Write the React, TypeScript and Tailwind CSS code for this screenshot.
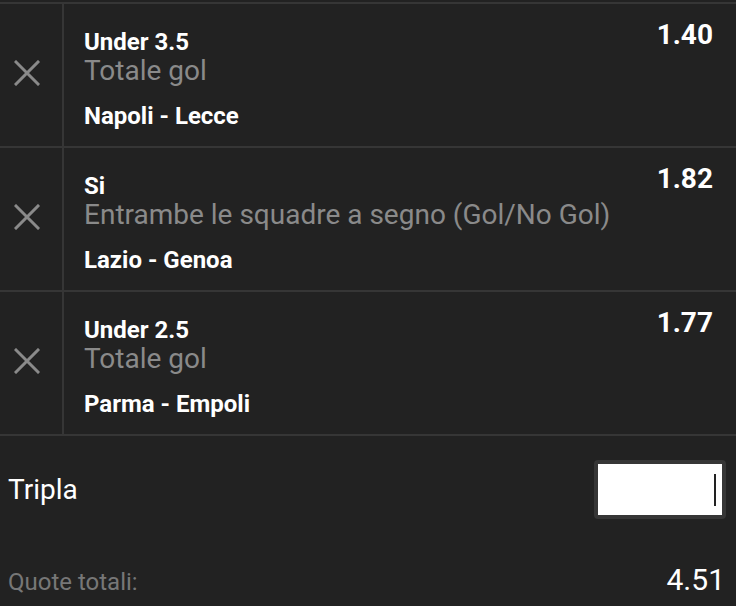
import React from "react";

type Bet = {
  pick: string;
  market: string;
  match: string;
  odds: string;
};

const bets: Bet[] = [
  { pick: "Under 3.5", market: "Totale gol", match: "Napoli - Lecce", odds: "1.40" },
  { pick: "Si", market: "Entrambe le squadre a segno (Gol/No Gol)", match: "Lazio - Genoa", odds: "1.82" },
  { pick: "Under 2.5", market: "Totale gol", match: "Parma - Empoli", odds: "1.77" },
];

function CloseIcon() {
  return (
    <svg width="26" height="26" viewBox="0 0 26 26" fill="none">
      <path d="M2 2 L24 24 M24 2 L2 24" stroke="#8a8a8a" strokeWidth="3" strokeLinecap="square" />
    </svg>
  );
}

function BetRow({ bet }: { bet: Bet }) {
  return (
    <div className="flex h-[144px] border-b-2 border-[#363636]">
      <div className="flex w-[64px] shrink-0 items-center border-r-2 border-[#363636] pl-[14px] pb-[4px]">
        <CloseIcon />
      </div>
      <div className="flex flex-1 justify-between">
        <div className="flex flex-col pl-[20px] pt-[25px]">
          <div className="text-[24px] font-bold leading-[26px] text-white">{bet.pick}</div>
          <div className="mt-[2px] text-[28px] leading-[28px] text-[#8a8a8a]">{bet.market}</div>
          <div className="mt-[17px] text-[24px] font-bold leading-[28px] text-white">{bet.match}</div>
        </div>
        <div className="pt-[15px] pr-[23px] text-[28px] font-bold leading-[32px] text-white">{bet.odds}</div>
      </div>
    </div>
  );
}

export default function App() {
  return (
    <main className="h-[606px] w-[736px] overflow-hidden bg-[#222222] pt-[2px] font-['Roboto',sans-serif]">
      <div className="border-t-2 border-[#363636]">
        {bets.map((bet) => (
          <BetRow key={bet.match} bet={bet} />
        ))}
      </div>

      <div className="mt-[24px] flex items-center justify-between pl-[8px] pr-[10px]">
        <span className="text-[28px] leading-[32px] text-white">Tripla</span>
        <div className="flex h-[59px] w-[132px] items-center justify-end rounded-[4px] border-4 border-[#363636] bg-white pr-[6px]">
          <span className="h-[32px] w-[2px] bg-[#222222]" />
        </div>
      </div>

      <div className="mt-[43px] flex items-baseline justify-between pl-[8px] pr-[11px]">
        <span className="text-[24px] leading-[28px] text-[#777777]">Quote totali:</span>
        <span className="text-[30px] leading-[36px] text-white">4.51</span>
      </div>
    </main>
  );
}
